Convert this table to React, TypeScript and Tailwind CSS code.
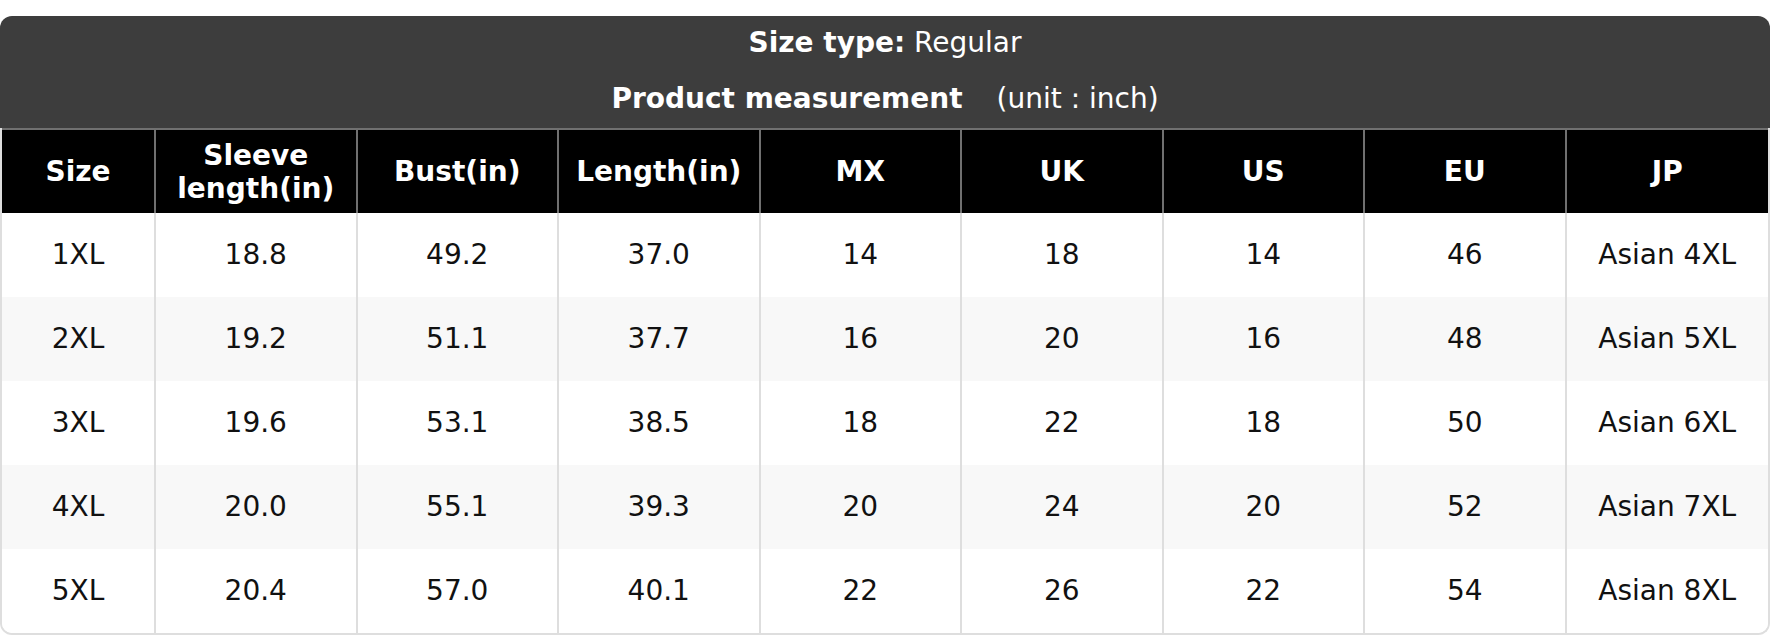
import React from "react";

const headers = ["Size", "Sleeve length(in)", "Bust(in)", "Length(in)", "MX", "UK", "US", "EU", "JP"];
const rows = [
  ["1XL", "18.8", "49.2", "37.0", "14", "18", "14", "46", "Asian 4XL"],
  ["2XL", "19.2", "51.1", "37.7", "16", "20", "16", "48", "Asian 5XL"],
  ["3XL", "19.6", "53.1", "38.5", "18", "22", "18", "50", "Asian 6XL"],
  ["4XL", "20.0", "55.1", "39.3", "20", "24", "20", "52", "Asian 7XL"],
  ["5XL", "20.4", "57.0", "40.1", "22", "26", "22", "54", "Asian 8XL"],
];

export default function App() {
  return (
    <div className="w-[1770px] h-[636px] bg-white pt-4 overflow-hidden [font-family:'DejaVu_Sans',Verdana,sans-serif] text-[28px]">
      <div className="flex flex-col">
        <div className="bg-[#3d3d3d] rounded-t-xl flex flex-col items-center text-white pt-[8px] pb-[10px]">
          <div className="h-[38px] leading-[38px]">
            <span className="font-bold">Size type:</span> Regular
          </div>
          <div className="h-[38px] leading-[38px] mt-[18px] flex">
            <span className="font-bold">Product measurement</span>
            <span className="ml-[34px]">(unit : inch)</span>
          </div>
        </div>
        <div className="grid grid-cols-[154px_repeat(8,minmax(0,1fr))] border-x-2 border-b-2 border-[#dedede] rounded-b-xl overflow-hidden">
          {headers.map((h, i) => (
            <div
              key={h}
              className={`bg-black text-white font-bold text-center leading-[33px] h-[85px] border-t-2 border-[#707070] flex items-center justify-center px-6 ${
                i < headers.length - 1 ? "border-r-2" : ""
              }`}
            >
              {h}
            </div>
          ))}
          {rows.map((r, ri) =>
            r.map((c, ci) => (
              <div
                key={`${ri}-${ci}`}
                className={`h-[84px] flex items-center justify-center text-[#111] ${
                  ri % 2 === 1 ? "bg-[#f8f8f8]" : "bg-white"
                } ${ci < r.length - 1 ? "border-r-2 border-[#dedede]" : ""}`}
              >
                {c}
              </div>
            ))
          )}
        </div>
      </div>
    </div>
  );
}
